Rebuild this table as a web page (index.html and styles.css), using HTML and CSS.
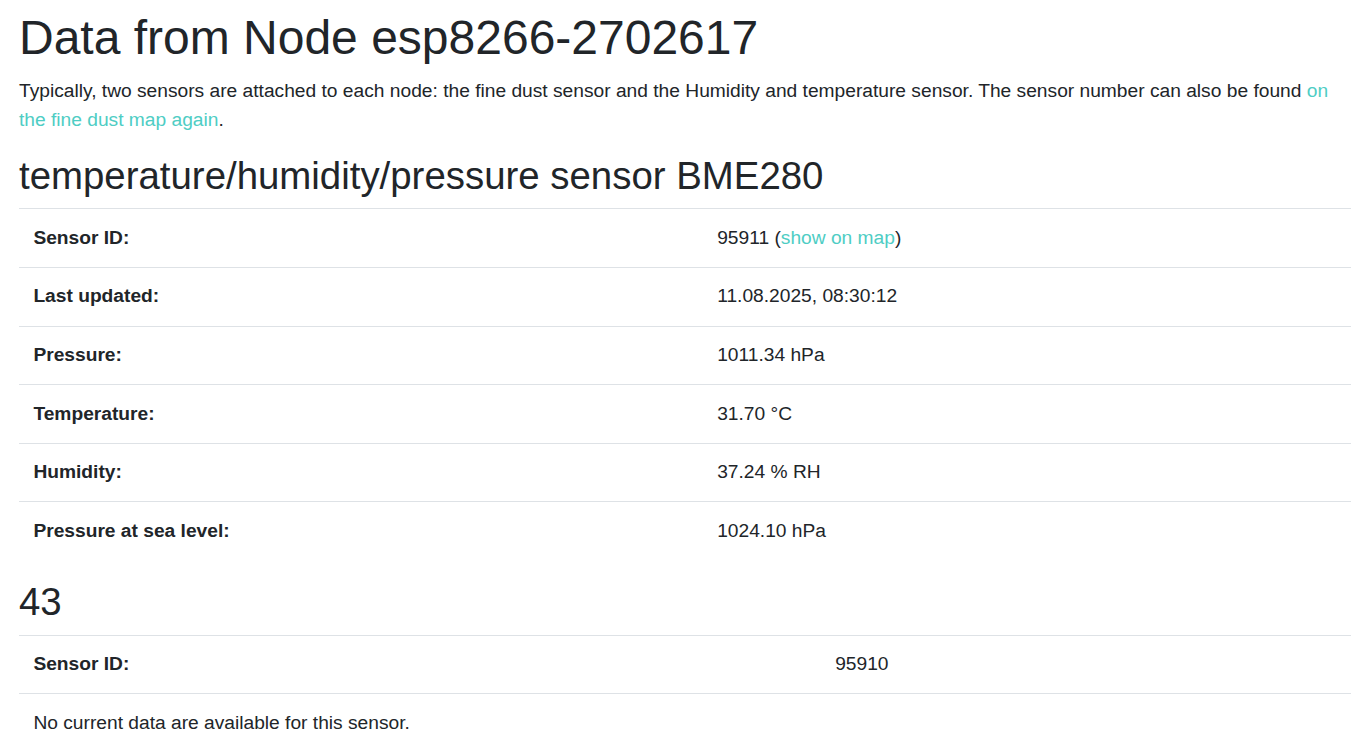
FILE: index.html
```html
<!DOCTYPE html>
<html lang="en">
<head>
<meta charset="utf-8">
<title>Data from Node esp8266-2702617</title>
<link rel="stylesheet" href="styles.css">
</head>
<body>
<main class="page">
  <h1 class="title">Data from Node esp8266-2702617</h1>
  <p class="intro">Typically, two sensors are attached to each node: the fine dust sensor and the Humidity and temperature sensor. The sensor number can also be found <a href="#">on the fine dust map again</a>.</p>

  <h2 class="sensor-title">temperature/humidity/pressure sensor BME280</h2>
  <table class="data-table first">
    <tr><th>Sensor ID:</th><td>95911 (<a href="#">show on map</a>)</td></tr>
    <tr><th>Last updated:</th><td>11.08.2025, 08:30:12</td></tr>
    <tr><th>Pressure:</th><td>1011.34 hPa</td></tr>
    <tr><th>Temperature:</th><td>31.70 °C</td></tr>
    <tr><th>Humidity:</th><td>37.24 % RH</td></tr>
    <tr><th>Pressure at sea level:</th><td>1024.10 hPa</td></tr>
  </table>

  <h2 class="sensor-title">43</h2>
  <table class="data-table second">
    <tr><th>Sensor ID:</th><td>95910</td></tr>
    <tr><td class="note" colspan="2">No current data are available for this sensor.</td></tr>
  </table>
</main>
</body>
</html>
```

FILE: styles.css
```css
html {
  font-size: 19.2px;
}
html, body {
  margin: 0;
  padding: 0;
  background: #fff;
}
body {
  font-family: "Liberation Sans", Arial, sans-serif;
  font-size: 1rem;
  line-height: 1.5;
  color: #212529;
}
.page {
  padding: 0 15px 0 19px;
}
a {
  color: #4ecdc4;
  text-decoration: none;
}
.title {
  font-size: 2.5rem;
  font-weight: 400;
  line-height: 1.2;
  margin: 9px 0 0.5rem;
}
.intro {
  margin: 0 0 18px;
  padding-top: 1px;
}
.sensor-title {
  font-size: 2rem;
  font-weight: 400;
  line-height: 1.2;
  margin: 0 0 0.5rem;
}
.data-table {
  width: 100%;
  border-collapse: collapse;
  margin-bottom: 1rem;
}
.data-table th,
.data-table td {
  text-align: left;
  padding: 0.75rem;
  border-top: 1px solid #dee2e6;
  vertical-align: top;
}
.data-table th {
  font-weight: 700;
}
.first th { width: 655px; }
.second th { width: 773px; }
```
